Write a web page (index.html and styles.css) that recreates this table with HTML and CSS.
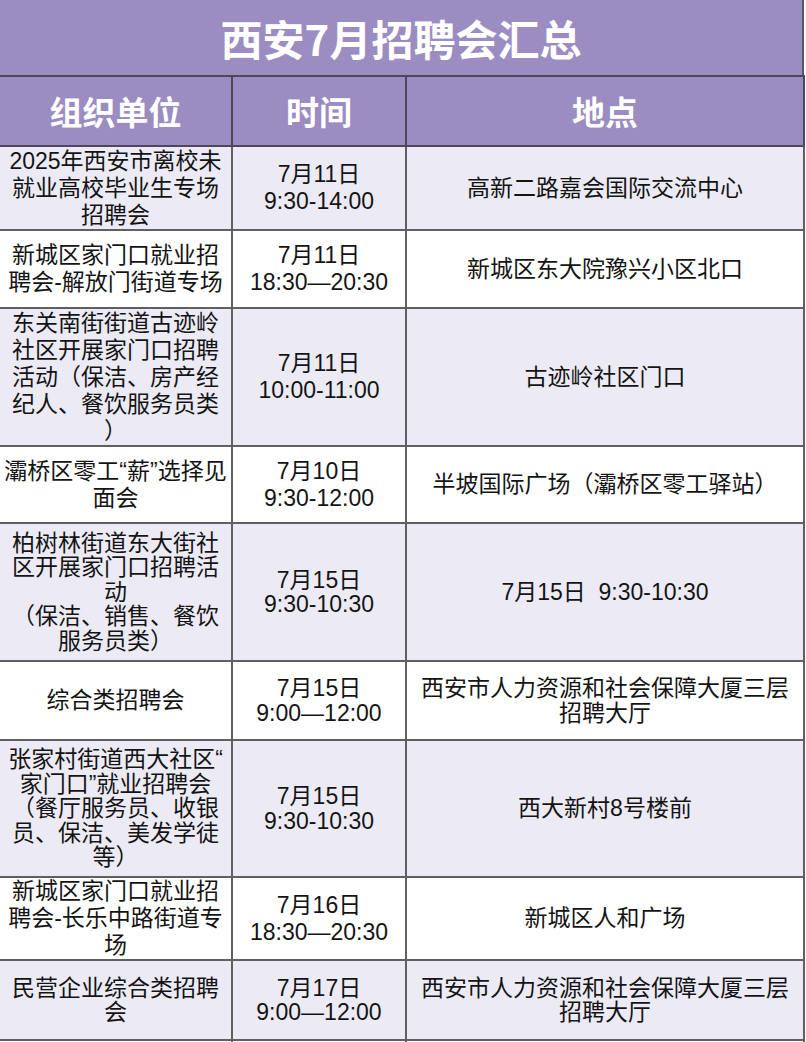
FILE: index.html
```html
<!DOCTYPE html>
<html lang="zh-CN">
<head>
<meta charset="utf-8">
<title>西安7月招聘会汇总</title>
<link rel="stylesheet" href="styles.css">
</head>
<body>
<div class="sheet">
  <div class="title">西安7月招聘会汇总</div>
  <table class="grid">
    <colgroup>
      <col class="c-org">
      <col class="c-time">
      <col class="c-place">
    </colgroup>
    <thead>
      <tr class="head">
        <th>组织单位</th>
        <th>时间</th>
        <th>地点</th>
      </tr>
    </thead>
    <tbody>
      <tr class="alt h84">
        <td>2025年西安市离校未<br>就业高校毕业生专场<br>招聘会</td>
        <td>7月11日<br>9:30-14:00</td>
        <td>高新二路嘉会国际交流中心</td>
      </tr>
      <tr class="h78">
        <td>新城区家门口就业招<br>聘会-解放门街道专场</td>
        <td>7月11日<br>18:30—20:30</td>
        <td>新城区东大院豫兴小区北口</td>
      </tr>
      <tr class="alt h138">
        <td>东关南街街道古迹岭<br>社区开展家门口招聘<br>活动（保洁、房产经<br>纪人、餐饮服务员类<br>）</td>
        <td>7月11日<br>10:00-11:00</td>
        <td>古迹岭社区门口</td>
      </tr>
      <tr class="h77">
        <td>灞桥区零工“薪”选择见<br>面会</td>
        <td>7月10日<br>9:30-12:00</td>
        <td>半坡国际广场（灞桥区零工驿站）</td>
      </tr>
      <tr class="alt h138 tight">
        <td>柏树林街道东大街社<br>区开展家门口招聘活<br>动<br>（保洁、销售、餐饮<br>服务员类）</td>
        <td>7月15日<br>9:30-10:30</td>
        <td>7月15日&nbsp;&nbsp;9:30-10:30</td>
      </tr>
      <tr class="h79 tight">
        <td>综合类招聘会</td>
        <td>7月15日<br>9:00—12:00</td>
        <td>西安市人力资源和社会保障大厦三层<br>招聘大厅</td>
      </tr>
      <tr class="alt h137 tight">
        <td>张家村街道西大社区“<br>家门口”就业招聘会<br>（餐厅服务员、收银<br>员、保洁、美发学徒<br>等）</td>
        <td>7月15日<br>9:30-10:30</td>
        <td>西大新村8号楼前</td>
      </tr>
      <tr class="h83">
        <td>新城区家门口就业招<br>聘会-长乐中路街道专<br>场</td>
        <td>7月16日<br>18:30—20:30</td>
        <td>新城区人和广场</td>
      </tr>
      <tr class="alt h80 tight">
        <td>民营企业综合类招聘<br>会</td>
        <td>7月17日<br>9:00—12:00</td>
        <td>西安市人力资源和社会保障大厦三层<br>招聘大厅</td>
      </tr>
      <tr class="h80">
        <td>&nbsp;</td>
        <td>&nbsp;</td>
        <td>&nbsp;</td>
      </tr>
    </tbody>
  </table>
</div>
</body>
</html>
```

FILE: styles.css
```css
html, body {
  margin: 0;
  padding: 0;
  background: #ffffff;
}

body {
  font-family: "Liberation Sans", "Noto Sans CJK SC", sans-serif;
  color: #141414;
  overflow: hidden;
}

.sheet {
  width: 804px;
}

.title {
  height: 75px;
  background: #9b8dc1;
  color: #ffffff;
  font-family: "Noto Sans CJK SC", sans-serif;
  font-weight: 700;
  font-size: 42px;
  line-height: 76px;
  text-align: center;
  border-right: 2px solid #5a5466;
  box-sizing: border-box;
}

.grid {
  width: 804px;
  border-collapse: collapse;
  table-layout: fixed;
}

.c-org { width: 232px; }
.c-time { width: 174px; }
.c-place { width: 398px; }

.grid th,
.grid td {
  border: 2px solid #606060;
  padding: 0 4px;
  text-align: center;
  vertical-align: middle;
  font-size: 23px;
  line-height: 27px;
  white-space: nowrap;
}

.grid .tight td {
  line-height: 24.5px;
}

.grid tr > :first-child {
  border-left: none;
}

.head th {
  height: 68px;
  background: #9b8dc1;
  color: #ffffff;
  font-family: "Noto Sans CJK SC", sans-serif;
  font-weight: 700;
  font-size: 33px;
  line-height: 40px;
  border-color: #4d4759;
}

.alt td {
  background: #ecebf5;
}

.h77 td { height: 75px; }
.h78 td { height: 76px; }
.h79 td { height: 77px; }
.h80 td { height: 78px; }
.h83 td { height: 81px; }
.h84 td { height: 82px; }
.h137 td { height: 135px; }
.h138 td { height: 136px; }
```
